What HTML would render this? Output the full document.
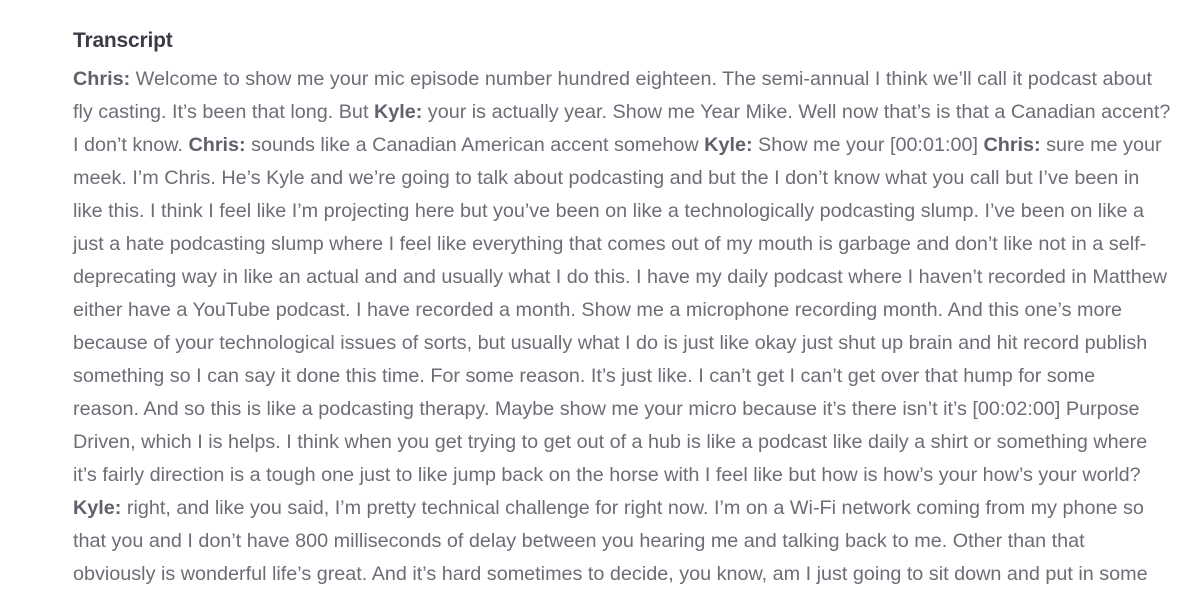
<!DOCTYPE html>
<html><head><meta charset="utf-8"><style>
html,body{margin:0;padding:0;background:#fff;width:1200px;height:587px;overflow:hidden}
body{font-family:"Liberation Sans",sans-serif;}
h2{position:absolute;left:73px;top:29px;margin:0;font-size:21px;font-weight:bold;color:#3a3d46;letter-spacing:-0.2px}
.t{position:absolute;left:73px;top:63px;color:#6b6e76;font-size:19.8px;line-height:33px;white-space:nowrap}
.t div{height:33px}
b{color:#5f626b}
</style></head><body>
<h2>Transcript</h2>
<div class="t">
<div><b>Chris:</b> Welcome to show me your mic episode number hundred eighteen. The semi-annual I think we’ll call it podcast about</div>
<div>fly casting. It’s been that long. But <b>Kyle:</b> your is actually year. Show me Year Mike. Well now that’s is that a Canadian accent?</div>
<div>I don’t know. <b>Chris:</b> sounds like a Canadian American accent somehow <b>Kyle:</b> Show me your [00:01:00] <b>Chris:</b> sure me your</div>
<div>meek. I’m Chris. He’s Kyle and we’re going to talk about podcasting and but the I don’t know what you call but I’ve been in</div>
<div>like this. I think I feel like I’m projecting here but you’ve been on like a technologically podcasting slump. I’ve been on like a</div>
<div>just a hate podcasting slump where I feel like everything that comes out of my mouth is garbage and don’t like not in a self-</div>
<div>deprecating way in like an actual and and usually what I do this. I have my daily podcast where I haven’t recorded in Matthew</div>
<div>either have a YouTube podcast. I have recorded a month. Show me a microphone recording month. And this one’s more</div>
<div>because of your technological issues of sorts, but usually what I do is just like okay just shut up brain and hit record publish</div>
<div>something so I can say it done this time. For some reason. It’s just like. I can’t get I can’t get over that hump for some</div>
<div>reason. And so this is like a podcasting therapy. Maybe show me your micro because it’s there isn’t it’s [00:02:00] Purpose</div>
<div>Driven, which I is helps. I think when you get trying to get out of a hub is like a podcast like daily a shirt or something where</div>
<div>it’s fairly direction is a tough one just to like jump back on the horse with I feel like but how is how’s your how’s your world?</div>
<div><b>Kyle:</b> right, and like you said, I’m pretty technical challenge for right now. I’m on a Wi-Fi network coming from my phone so</div>
<div>that you and I don’t have 800 milliseconds of delay between you hearing me and talking back to me. Other than that</div>
<div>obviously is wonderful life’s great. And it’s hard sometimes to decide, you know, am I just going to sit down and put in some</div>
</div>
</body></html>
